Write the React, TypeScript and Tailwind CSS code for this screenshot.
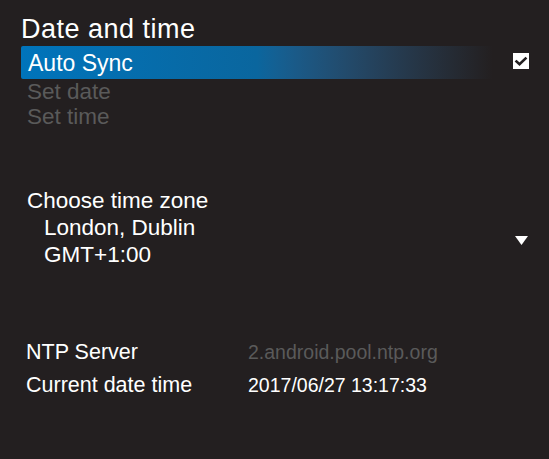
import React from 'react'

const font = { fontFamily: '"Liberation Sans", Arial, sans-serif' }

const CheckBox = () => (
  <svg width="16" height="16" viewBox="0 0 16 16" className="shrink-0">
    <rect x="0" y="0" width="16" height="16" fill="#ffffff" />
    <path d="M3.5 8.5 L6.5 11.2 L12.5 5.5" fill="none" stroke="#231f20" strokeWidth="2.6" strokeLinecap="square" />
  </svg>
)

const Caret = () => (
  <svg width="13" height="9" viewBox="0 0 13 9" className="shrink-0">
    <polygon points="0,0 13,0 6.5,9" fill="#ffffff" />
  </svg>
)

export default function App() {
  return (
    <div className="w-screen h-screen bg-[#231f20] text-white overflow-hidden" style={font}>
      <div className="pl-[21px] pt-[14px] flex flex-col">
        <h1 className="text-[27px] leading-[30px] tracking-[0.5px] font-normal">Date and time</h1>

        <div className="mt-[2px] flex items-center">
          <div className="w-[472px] h-[33px] rounded-l-[2px] bg-gradient-to-r from-[#0074bb] via-[#0a669e] via-50% to-[#231f20] pl-[7px] pt-[1px] text-[23px] leading-[32px]">
            Auto Sync
          </div>
          <div className="ml-[20px] -mt-[4px]">
            <CheckBox />
          </div>
        </div>

        <div className="pl-[6px] text-[22.5px] leading-[25px] text-[#5a5a5a]">Set date</div>
        <div className="pl-[6px] text-[22.5px] leading-[25px] text-[#5a5a5a]">Set time</div>

        <div className="mt-[58px] pl-[6px] pr-[21px] flex items-start justify-between">
          <div className="text-[22.5px] leading-[27px]">
            <div>Choose time zone</div>
            <div className="pl-[17px]">London, Dublin</div>
            <div className="pl-[17px]">GMT+1:00</div>
          </div>
          <div className="mt-[49px]">
            <Caret />
          </div>
        </div>

        <div className="mt-[68px] pl-[5px] grid grid-cols-[222px_1fr] items-baseline">
          <div className="text-[21.5px] leading-[33px]">NTP Server</div>
          <div className="text-[19.5px] leading-[33px] text-[#5a5a5a]">2.android.pool.ntp.org</div>
          <div className="text-[21.5px] leading-[33px]">Current date time</div>
          <div className="text-[19.5px] leading-[33px]">2017/06/27 13:17:33</div>
        </div>
      </div>
    </div>
  )
}
